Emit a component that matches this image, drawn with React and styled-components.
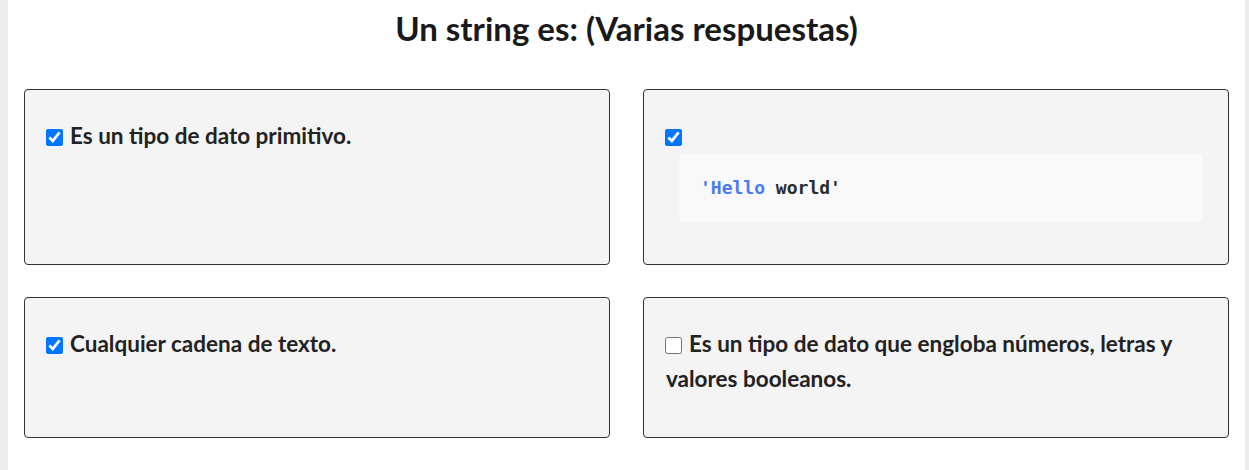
import React from 'react';
import styled, { createGlobalStyle } from 'styled-components';

const GlobalStyle = createGlobalStyle`
	body {
		margin: 0;
		background: #ececec;
		font-family: Lato, 'Noto Sans', sans-serif;
		color: #222;
	}
`;

const Page = styled.main`
	margin: 0 4px 0 8px;
	min-height: 470px;
	background: #fff;
	padding: 8px 16px 0 16px;
	box-sizing: border-box;
`;

const Title = styled.h1`
	margin: 0 0 41px;
	text-align: center;
	font-size: 33px;
	line-height: 40px;
	font-weight: 700;
	color: #1a1a1a;
`;

const Grid = styled.div`
	display: grid;
	grid-template-columns: 1fr 1fr;
	column-gap: 33px;
	row-gap: 32px;
`;

const Card = styled.div`
	background: #f4f4f4;
	border: 1px solid #333;
	border-radius: 4px;
	padding: 28px 22px 41px;
`;

const Option = styled.label`
	display: block;
	font-size: 22.5px;
	line-height: 35px;
	font-weight: 700;
	color: #222;
`;

const Box = styled.input.attrs({ type: 'checkbox' })`
	width: 17px;
	height: 17px;
	margin: 0 7px 0 -1px;
	vertical-align: -2px;
`;

const CodeBlock = styled.pre`
	margin: 0 3px 1px 13px;
	padding: 24px 21px 23px;
	background: #f9f9f9;
	border-radius: 5px;
	font-family: 'DejaVu Sans Mono', 'Liberation Mono', monospace;
	font-size: 18px;
	line-height: 22px;
	font-weight: 700;
	color: #2b2b2b;
`;

const Token = styled.span`
	color: ${(p) => (p.$kind === 'string' ? '#4a7cf0' : '#2b2b2b')};
`;

const answers = [
	{ text: 'Es un tipo de dato primitivo.', checked: true },
	{ code: true, checked: true },
	{ text: 'Cualquier cadena de texto.', checked: true },
	{ text: 'Es un tipo de dato que engloba números, letras y valores booleanos.', checked: false },
];

const App = () => {
	return (
		<>
			<GlobalStyle />
			<Page>
				<Title>Un string es: (Varias respuestas)</Title>
				<Grid>
					{answers.map((a, i) => (
						<Card key={i}>
							<Option>
								<Box defaultChecked={a.checked} />
								{a.text}
							</Option>
							{a.code && (
								<CodeBlock>
									<Token $kind="string">'Hello</Token> world'
								</CodeBlock>
							)}
						</Card>
					))}
				</Grid>
			</Page>
		</>
	);
};

export default App;
